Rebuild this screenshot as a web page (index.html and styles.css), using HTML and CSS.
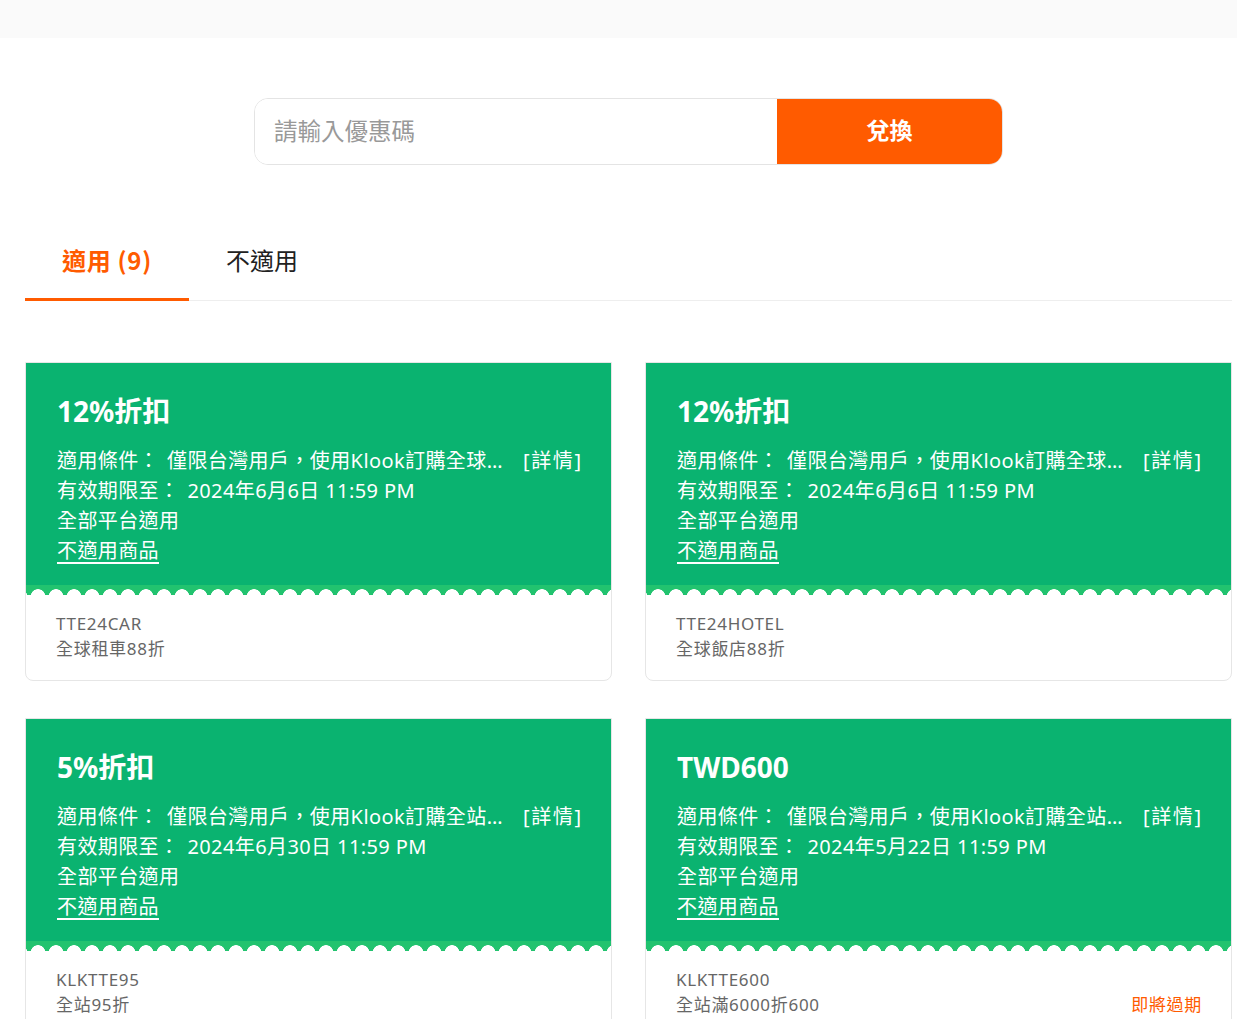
FILE: index.html
```html
<!DOCTYPE html>
<html lang="zh-Hant">
<head>
<meta charset="utf-8">
<title>優惠券</title>
<link rel="stylesheet" href="styles.css">
</head>
<body>
<div class="topbar"></div>
<main class="main">
  <div class="redeem">
    <input class="redeem-input" type="text" placeholder="請輸入優惠碼">
    <button class="redeem-btn">兌換</button>
  </div>
  <div class="tabs">
    <div class="tab active">適用 (9)</div>
    <div class="tab">不適用</div>
  </div>
  <div class="cards">
    <div class="card">
      <div class="card-top">
        <div class="card-title">12%折扣</div>
        <div class="line"><span class="ell">適用條件：<span class="sp"></span>僅限台灣用戶，使用Klook訂購全球租車享折扣優惠</span><span class="more">[詳情]</span></div>
        <div class="line">有效期限至：<span class="sp"></span>2024年6月6日 11:59 PM</div>
        <div class="line">全部平台適用</div>
        <div class="line"><span class="link">不適用商品</span></div>
      </div>
      <div class="scallop"></div>
      <div class="card-bottom">
        <div class="code">TTE24CAR</div>
        <div class="desc-row"><span>全球租車88折</span></div>
      </div>
    </div>
    <div class="card">
      <div class="card-top">
        <div class="card-title">12%折扣</div>
        <div class="line"><span class="ell">適用條件：<span class="sp"></span>僅限台灣用戶，使用Klook訂購全球飯店享折扣優惠</span><span class="more">[詳情]</span></div>
        <div class="line">有效期限至：<span class="sp"></span>2024年6月6日 11:59 PM</div>
        <div class="line">全部平台適用</div>
        <div class="line"><span class="link">不適用商品</span></div>
      </div>
      <div class="scallop"></div>
      <div class="card-bottom">
        <div class="code">TTE24HOTEL</div>
        <div class="desc-row"><span>全球飯店88折</span></div>
      </div>
    </div>
    <div class="card">
      <div class="card-top">
        <div class="card-title">5%折扣</div>
        <div class="line"><span class="ell">適用條件：<span class="sp"></span>僅限台灣用戶，使用Klook訂購全站商品享折扣優惠</span><span class="more">[詳情]</span></div>
        <div class="line">有效期限至：<span class="sp"></span>2024年6月30日 11:59 PM</div>
        <div class="line">全部平台適用</div>
        <div class="line"><span class="link">不適用商品</span></div>
      </div>
      <div class="scallop"></div>
      <div class="card-bottom">
        <div class="code">KLKTTE95</div>
        <div class="desc-row"><span>全站95折</span></div>
      </div>
    </div>
    <div class="card">
      <div class="card-top">
        <div class="card-title">TWD600</div>
        <div class="line"><span class="ell">適用條件：<span class="sp"></span>僅限台灣用戶，使用Klook訂購全站商品享折扣優惠</span><span class="more">[詳情]</span></div>
        <div class="line">有效期限至：<span class="sp"></span>2024年5月22日 11:59 PM</div>
        <div class="line">全部平台適用</div>
        <div class="line"><span class="link">不適用商品</span></div>
      </div>
      <div class="scallop"></div>
      <div class="card-bottom">
        <div class="code">KLKTTE600</div>
        <div class="desc-row"><span>全站滿6000折600</span><span class="expire">即將過期</span></div>
      </div>
    </div>
  </div>
</main>
</body>
</html>
```

FILE: styles.css
```css
* { box-sizing: border-box; }
html, body {
  margin: 0;
  padding: 0;
  background: #fff;
  font-family: "Noto Sans", "Noto Sans CJK TC", sans-serif;
  color: #212121;
}
.topbar {
  height: 38px;
  background: #fafafa;
}
.main {
  padding: 0 5px 40px 25px;
}
.redeem {
  width: 749px;
  height: 67px;
  margin: 60px auto 0;
  display: flex;
  border: 1px solid #e4e4e4;
  border-radius: 14px;
  overflow: hidden;
}
.redeem-input {
  flex: 1;
  min-width: 0;
  border: none;
  outline: none;
  padding: 0 19px 4px;
  font-family: "Noto Sans CJK TC", sans-serif;
  font-size: 23.5px;
  color: #212121;
  background: #fff;
}
.redeem-input::placeholder { color: #999; }
.redeem-btn {
  width: 225px;
  border: none;
  padding: 0 0 5px;
  background: #ff5b00;
  color: #fff;
  font-family: "Noto Sans CJK TC", sans-serif;
  font-size: 23px;
  font-weight: 700;
  cursor: pointer;
}
.tabs {
  display: flex;
  margin-top: 63px;
  border-bottom: 1px solid #eeeeee;
}
.tab {
  height: 73px;
  padding: 0 37px 7px;
  display: flex;
  align-items: center;
  font-family: "Noto Sans CJK TC", sans-serif;
  font-size: 24px;
  color: #212121;
  border-bottom: 3px solid transparent;
  margin-bottom: -1px;
}
.tab.active {
  color: #ff5b00;
  font-weight: 700;
  letter-spacing: 0.7px;
  border-bottom-color: #ff5b00;
}
.cards {
  margin-top: 61px;
  display: grid;
  grid-template-columns: 1fr 1fr;
  column-gap: 33px;
  row-gap: 37px;
}
.card {
  border: 1px solid #e6e6e6;
  border-radius: 0 0 8px 8px;
  overflow: hidden;
  background: #fff;
}
.card-top {
  background: #0ab370;
  color: #fff;
  padding: 28px 30px 19px 31px;
}
.card-title {
  font-size: 28px;
  font-weight: 700;
  line-height: 40px;
  margin-bottom: 15px;
}
.line {
  display: flex;
  font-size: 20px;
  line-height: 30px;
  letter-spacing: 0.4px;
  white-space: nowrap;
}
.sp {
  display: inline-block;
  width: 8px;
}
.ell {
  overflow: hidden;
  text-overflow: ellipsis;
  min-width: 0;
  flex: 1;
}
.more {
  flex: none;
  margin-left: 15px;
  letter-spacing: 1.6px;
  margin-right: -1.6px;
}
.link {
  text-decoration: underline;
  text-underline-offset: 4px;
}
.scallop {
  height: 10px;
  background-color: #22c36f;
  background-image: radial-gradient(circle at 9px 11.5px, #fff 7px, transparent 7.6px);
  background-size: 18px 10px;
  background-repeat: repeat-x;
  background-position: 3px 0;
}
.card-bottom {
  padding: 16px 29px 19px 30px;
  font-size: 17px;
  line-height: 25px;
  letter-spacing: 0.7px;
  color: #666;
}
.desc-row {
  display: flex;
  justify-content: space-between;
}
.expire {
  color: #ff5b00;
}
```
